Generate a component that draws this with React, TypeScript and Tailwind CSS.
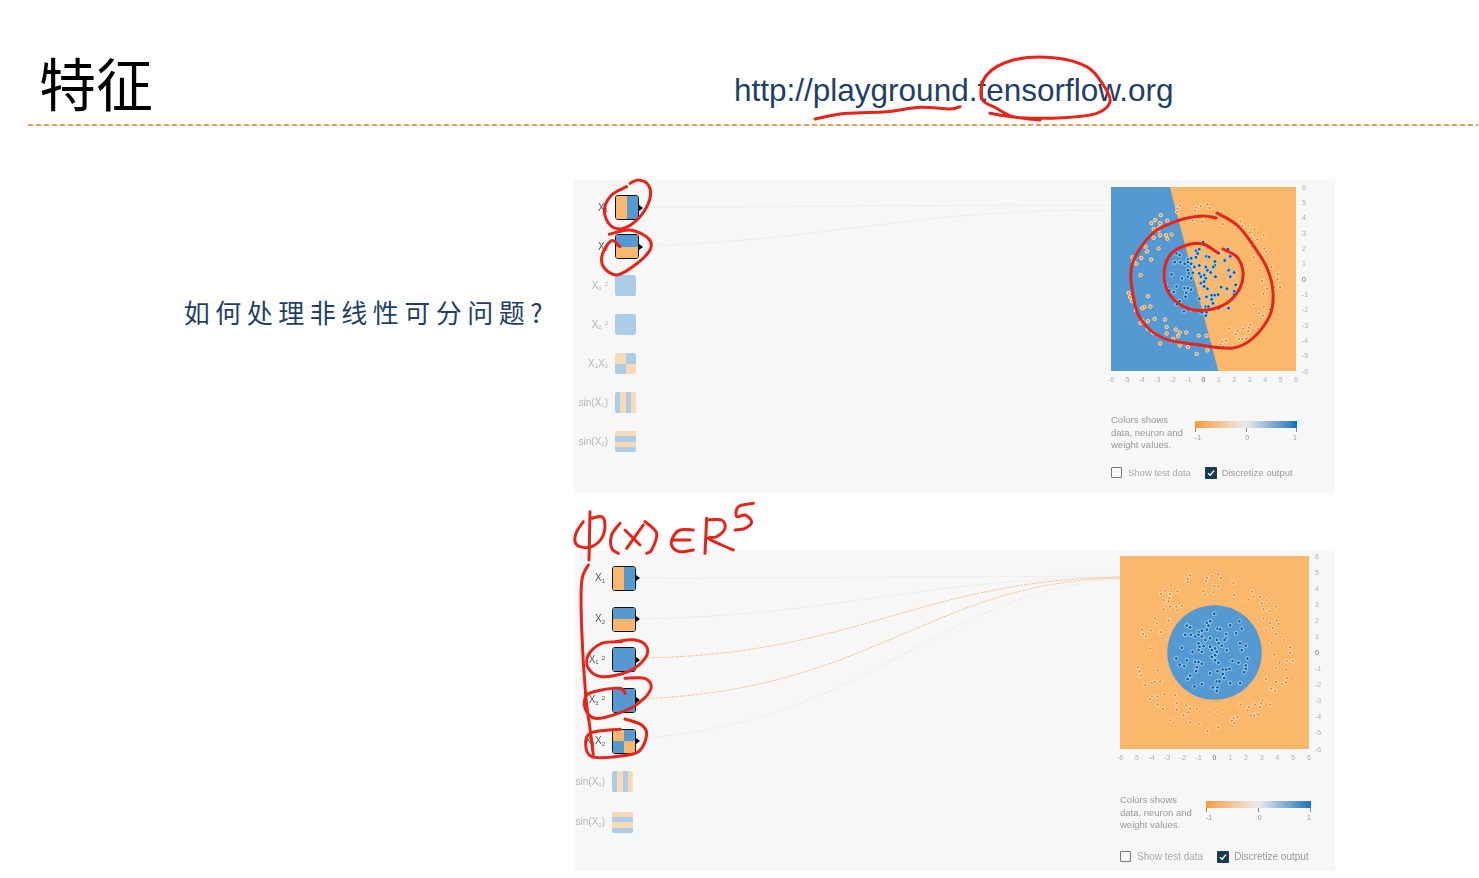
const BLUE = "#5599d3";
const ORANGE = "#fbb76c";
const CJK = "font-['Noto_Sans_CJK_SC','Noto_Sans',sans-serif]";

type Pt = [number, number];

// scatter positions, read off the second plot (px in a 3x crop)
const OUTER: Pt[] = [
  [270, 95], [263, 105], [262, 115], [320, 102], [318, 112], [335, 97], [355, 92], [362, 103], [400, 117], [343, 127], [355, 128],
  [340, 145], [402, 153], [212, 125], [195, 140], [183, 150], [210, 150], [207, 163], [232, 142], [190, 168], [205, 172], [310, 142],
  [315, 152], [456, 143], [462, 158], [445, 167], [480, 158], [485, 178], [500, 168], [528, 187], [190, 195], [210, 187], [228, 187],
  [245, 185], [232, 198], [490, 195], [508, 200], [490, 222], [165, 222], [170, 237], [205, 228], [530, 228], [535, 238], [510, 235],
  [125, 255], [128, 268], [137, 275], [152, 257], [182, 262], [497, 255], [518, 250], [528, 268], [551, 285], [515, 295], [150, 310],
  [570, 307], [570, 323], [523, 328], [578, 347], [560, 347], [538, 352], [527, 368], [113, 365], [118, 378], [123, 390], [173, 375],
  [558, 372], [135, 418], [155, 412], [162, 408], [180, 407], [497, 400], [560, 397], [558, 410], [545, 415], [528, 408], [513, 428],
  [525, 435], [155, 450], [150, 458], [172, 452], [193, 445], [225, 447], [172, 475], [188, 488], [230, 470], [230, 490], [258, 478],
  [270, 487], [265, 498], [290, 487], [250, 507], [422, 475], [487, 462], [483, 472], [465, 475], [447, 482], [480, 483], [510, 475],
  [442, 492], [470, 503], [452, 507], [462, 507], [475, 505], [328, 497], [352, 497], [412, 512], [400, 515], [395, 523], [403, 530],
  [210, 521], [270, 527], [295, 532], [355, 542], [322, 553],
];
const INNER: Pt[] = [
  [342, 208], [260, 243], [270, 248], [330, 230], [320, 235], [325, 243], [305, 258], [295, 262], [390, 242], [418, 230], [425, 252],
  [352, 252], [360, 254], [408, 265], [255, 270], [272, 270], [285, 275], [295, 270], [305, 275], [320, 255], [378, 268], [378, 280],
  [373, 285], [350, 285], [330, 280], [315, 285], [295, 295], [298, 305], [310, 303], [245, 308], [277, 320], [295, 315], [305, 320],
  [330, 305], [345, 310], [355, 295], [365, 302], [335, 315], [350, 320], [380, 315], [420, 295], [437, 302], [425, 315], [228, 340],
  [238, 358], [252, 362], [260, 345], [285, 350], [295, 350], [305, 355], [290, 365], [288, 377], [345, 330], [335, 335], [345, 345],
  [355, 352], [397, 347], [415, 352], [442, 340], [437, 360], [437, 370], [432, 380], [330, 383], [352, 377], [368, 372], [378, 372],
  [388, 370], [368, 385], [372, 397], [390, 412], [420, 412], [270, 390], [262, 400], [283, 422], [305, 415], [338, 425], [350, 407],
  [358, 407], [352, 425], [350, 435],
];

const X1 = <>X<sub className="text-[6px]">1</sub></>;
const X2 = <>X<sub className="text-[6px]">2</sub></>;

const features = [
  { label: X1, colors: [ORANGE, BLUE], dir: "row" },
  { label: X2, colors: [BLUE, ORANGE], dir: "col" },
  { label: <>X<sub className="text-[6px]">1</sub><sup className="ml-[3px] text-[6px]">2</sup></>, colors: [BLUE], dir: "row" },
  { label: <>X<sub className="text-[6px]">2</sub><sup className="ml-[3px] text-[6px]">2</sup></>, colors: [BLUE], dir: "row" },
  { label: <>{X1}{X2}</>, colors: [], dir: "cross" },
  { label: <>sin({X1})</>, colors: [BLUE, ORANGE, BLUE, ORANGE], dir: "row" },
  { label: <>sin({X2})</>, colors: [ORANGE, BLUE, ORANGE, BLUE], dir: "col" },
];

function FeatureBox({ colors, dir, active, size }: { colors: string[]; dir: string; active: boolean; size: string }) {
  const inner =
    dir === "cross" ? (
      <div className="grid h-full w-full grid-cols-2 grid-rows-2">
        <div style={{ background: ORANGE }} />
        <div style={{ background: BLUE }} />
        <div style={{ background: BLUE }} />
        <div style={{ background: ORANGE }} />
      </div>
    ) : (
      <div className={`flex h-full w-full ${dir === "col" ? "flex-col" : "flex-row"}`}>
        {colors.map((c, i) => (
          <div key={i} className="flex-1" style={{ background: c }} />
        ))}
      </div>
    );
  if (!active) return <div className="h-[21px] w-[21px] overflow-hidden rounded-[2px] opacity-45">{inner}</div>;
  return (
    <div className={`relative ${size}`}>
      <div className="h-full w-full overflow-hidden rounded-[3px] border-[1.5px] border-[#111]">{inner}</div>
      <div className="absolute right-[-4px] top-1/2 h-0 w-0 -translate-y-1/2 border-y-[3px] border-l-[4px] border-y-transparent border-l-black" />
    </div>
  );
}

function Features({ activeCount, rowClass, labelClass, size }: { activeCount: number; rowClass: string; labelClass: string; size: string }) {
  return (
    <div className="flex shrink-0 flex-col">
      {features.map((f, i) => (
        <div key={i} className={`flex items-center gap-[7px] ${rowClass}`}>
          <div className={`whitespace-nowrap text-right text-[10px] leading-none ${labelClass} ${i < activeCount ? "text-[#555]" : "text-[#b5b5b5]"}`}>
            {f.label}
          </div>
          <FeatureBox colors={f.colors} dir={f.dir} active={i < activeCount} size={size} />
        </div>
      ))}
    </div>
  );
}

function Chart({ w, h, kind }: { w: number; h: number; kind: "line" | "circle" }) {
  const ux = w / 12;
  const uy = h / 12;
  const px = (x: number) => ((x - 343) / 47.3) * ux + w / 2;
  const py = (y: number) => ((y - 322) / 47.3) * uy + h / 2;
  const ticks = [-6, -5, -4, -3, -2, -1, 0, 1, 2, 3, 4, 5, 6];
  return (
    <svg width={w + 24} height={h + 16} className="block overflow-visible font-['Liberation_Sans',sans-serif]">
      <rect width={w} height={h} fill={ORANGE} />
      {kind === "line" ? (
        <polygon points={`0,0 ${w * 0.318},0 ${w * 0.58},${h} 0,${h}`} fill={BLUE} />
      ) : (
        <circle cx={w / 2} cy={h / 2} r={w * 0.25} fill={BLUE} />
      )}
      {OUTER.map(([x, y], i) => (
        <circle key={i} cx={px(x)} cy={py(y)} r={1.7} fill="#e8892a" stroke="#fde3c0" strokeWidth={1} />
      ))}
      {INNER.map(([x, y], i) => (
        <circle key={i} cx={px(x)} cy={py(y)} r={1.9} fill="#0a5fa3" stroke="#b9daf3" strokeWidth={0.9} />
      ))}
      {ticks.map((t) => (
        <text key={`b${t}`} x={w / 2 + t * ux} y={h + 11} fontSize={7} textAnchor="middle" fill={t === 0 ? "#666" : "#b0b0b0"}>
          {t}
        </text>
      ))}
      {ticks.map((t) => (
        <text key={`r${t}`} x={w + 6} y={h / 2 - t * uy + 2.5} fontSize={7} fill={t === 0 ? "#666" : "#b0b0b0"}>
          {t}
        </text>
      ))}
    </svg>
  );
}

function Legend({ barClass }: { barClass: string }) {
  return (
    <div className="flex items-start">
      <div className="w-[84px] text-[9.5px] leading-[12.5px] text-[#999]">
        Colors shows
        <br />
        data, neuron and
        <br />
        weight values.
      </div>
      <div className={`mt-[7px] ${barClass}`}>
        <div className="h-[7px] bg-gradient-to-r from-[#f79a2e] via-[#e8eaeb] to-[#0872b8]" />
        <div className="flex h-[4px] justify-between">
          <span className="border-l border-[#888]" />
          <span className="border-l border-[#888]" />
          <span className="border-l border-[#888]" />
        </div>
        <div className="flex justify-between pt-[1px] text-[7px] leading-[9px] text-[#999]">
          <span>-1</span>
          <span>0</span>
          <span>1</span>
        </div>
      </div>
    </div>
  );
}

function Checks({ textClass }: { textClass: string }) {
  return (
    <div className={`flex items-center gap-[14px] leading-none text-[#aaa] ${textClass}`}>
      <div className="flex items-center gap-[6px]">
        <div className="h-[11px] w-[11px] rounded-[1px] border-[1.5px] border-[#777]" />
        Show test data
      </div>
      <div className="flex items-center gap-[5px]">
        <div className="flex h-[12px] w-[12px] items-center justify-center rounded-[1px] bg-[#183d4e]">
          <svg width="8" height="8" viewBox="0 0 8 8" fill="none" stroke="#fff" strokeWidth="1.4">
            <path d="M1 4.2 3.2 6.3 7 1.6" />
          </svg>
        </div>
        <span className="text-[#999]">Discretize output</span>
      </div>
    </div>
  );
}

// catmull-rom through the points, for the pen strokes
function ink(pts: Pt[]) {
  let d = `M${pts[0][0]} ${pts[0][1]}`;
  for (let i = 0; i < pts.length - 1; i++) {
    const p0 = pts[Math.max(i - 1, 0)];
    const p1 = pts[i];
    const p2 = pts[i + 1];
    const p3 = pts[Math.min(i + 2, pts.length - 1)];
    d += ` C${p1[0] + (p2[0] - p0[0]) / 6} ${p1[1] + (p2[1] - p0[1]) / 6} ${p2[0] - (p3[0] - p1[0]) / 6} ${p2[1] - (p3[1] - p1[1]) / 6} ${p2[0]} ${p2[1]}`;
  }
  return d;
}

// pts given in a 3x zoom crop with origin (ox, oy)
const z = (ox: number, oy: number, pts: Pt[]): Pt[] => pts.map(([x, y]) => [ox + x / 3, oy + y / 3]);

const strokes: Pt[][] = [
  // url underline and circle
  z(720, 45, [[285, 222], [380, 205], [500, 200], [600, 187], [690, 192], [720, 185]]),
  z(720, 45, [[960, 225], [880, 215], [830, 190], [785, 160], [800, 90], [880, 45], [1000, 38], [1100, 65], [1150, 120], [1170, 170], [1130, 205], [1030, 218], [900, 218], [810, 205]]),
  // first panel, input loops
  z(570, 175, [[170, 35], [125, 60], [103, 105], [120, 150], [160, 160], [210, 125], [240, 70], [235, 30], [205, 15], [180, 25]]),
  z(570, 175, [[118, 178], [180, 165], [235, 190], [240, 225], [195, 270], [140, 300], [100, 275], [98, 235], [125, 197], [150, 215]]),
  // first panel, rings on the plot
  [[1216, 218], [1203, 216], [1180, 220], [1153, 233], [1133, 262], [1132, 288], [1140, 318], [1163, 338], [1200, 345], [1233, 348], [1253, 338], [1270, 315], [1273, 292], [1267, 268], [1253, 245], [1237, 225], [1217, 213]],
  [[1218, 253], [1203, 244], [1187, 245], [1170, 255], [1164, 275], [1170, 295], [1187, 308], [1207, 310], [1227, 303], [1240, 288], [1243, 272], [1237, 257], [1223, 249]],
  // phi(x) in R^5
  z(565, 495, [[55, 80], [35, 110], [30, 140], [45, 155], [80, 155], [110, 130], [120, 90], [110, 65], [80, 70]]),
  z(565, 495, [[75, 50], [72, 195]]),
  z(565, 495, [[165, 85], [140, 120], [140, 160], [160, 175]]),
  z(565, 495, [[180, 105], [225, 150]]),
  z(565, 495, [[235, 90], [185, 160]]),
  z(565, 495, [[240, 80], [275, 115], [260, 165], [245, 175]]),
  z(565, 495, [[385, 105], [345, 105], [322, 130], [322, 155], [345, 170], [385, 165]]),
  z(565, 495, [[325, 135], [375, 135]]),
  z(565, 495, [[425, 70], [420, 175]]),
  z(565, 495, [[425, 75], [470, 75], [480, 100], [455, 125], [430, 130], [470, 150], [505, 165]]),
  z(565, 495, [[565, 25], [520, 35], [515, 65], [540, 60], [560, 80], [540, 100], [510, 105]]),
  // second panel, bracket and loops
  z(565, 495, [[70, 210], [50, 260], [50, 400], [62, 600], [75, 700], [85, 780]]),
  z(565, 495, [[150, 440], [210, 435], [245, 455], [240, 490], [190, 530], [110, 545], [70, 520], [70, 480], [110, 445], [170, 440]]),
  z(565, 495, [[180, 550], [240, 550], [258, 580], [220, 625], [160, 655], [90, 670], [60, 640], [65, 600], [110, 585], [165, 580], [180, 595]]),
  z(565, 495, [[180, 672], [230, 690], [245, 720], [220, 770], [150, 785], [80, 785], [62, 750], [75, 715], [130, 705], [165, 703]]),
];

export default function App() {
  return (
    <div className="relative h-[878px] w-[1479px] overflow-hidden bg-white font-['Liberation_Sans',sans-serif]">
      <header className="flex h-[124px] items-start pl-[39px]">
        <h1 className={`w-[695px] pt-[39px] text-[57px] leading-[84px] text-black ${CJK}`}>特征</h1>
        <a className="pt-[71px] text-[31.5px] leading-[38px] text-[#1f3f66]">http://playground.tensorflow.org</a>
      </header>
      <div className="ml-[28px] mr-[1px] h-[2px] bg-[repeating-linear-gradient(90deg,#d9a05b_0_5px,transparent_5px_8px)]" />

      <div className="flex">
        <div className="flex w-[574px] shrink-0 justify-end pr-[26px] pt-[168px]">
          <p className={`whitespace-nowrap text-[26px] leading-[36px] tracking-[5.5px] text-[#1f3f66] ${CJK}`}>如何处理非线性可分问题?</p>
        </div>

        <div className="flex flex-col gap-[58px] pt-[54px]">
          {/* first run: only x1, x2 on */}
          <section className="flex h-[313px] w-[761px] bg-[#f7f7f7] blur-[0.5px]">
            <div className="pt-[8px]">
              <Features activeCount={2} rowClass="h-[39px]" labelClass="w-[34px]" size="h-[25px] w-[24px]" />
            </div>
            <svg width="472" height="313" className="block shrink-0" fill="none" stroke="#eeeeee" strokeWidth="1">
              <path d="M0 27 C160 27 300 25 472 25" />
              <path d="M0 66 C200 60 260 30 472 30" />
            </svg>
            <div className="pt-[7px]">
              <Chart w={185} h={184} kind="line" />
              <div className="mt-[27px]">
                <Legend barClass="w-[102px]" />
              </div>
              <div className="mt-[15px]">
                <Checks textClass="text-[9.5px]" />
              </div>
            </div>
          </section>

          {/* second run: squares and product on */}
          <section className="ml-[1px] flex h-[320px] w-[760px] bg-[#f7f7f7] blur-[0.5px]">
            <div className="pt-[7px]">
              <Features activeCount={5} rowClass="h-[40.7px]" labelClass="w-[30px]" size="h-[25px] w-[24px]" />
            </div>
            <svg width="484" height="320" className="block shrink-0" fill="none" strokeWidth="1">
              <path d="M0 27 C160 27 300 26 484 25" stroke="#eeeeee" />
              <path d="M0 68 C200 65 280 28 484 26" stroke="#eeeeee" />
              <path d="M0 107 C220 105 280 30 484 26" stroke="#f3c99a" strokeDasharray="3 1" />
              <path d="M0 148 C240 140 290 32 484 27" stroke="#f3c99a" strokeDasharray="3 1" />
              <path d="M0 188 C240 170 300 40 484 28" stroke="#eeeeee" />
            </svg>
            <div className="pt-[5px]">
              <Chart w={189} h={193} kind="circle" />
              <div className="mt-[29px]">
                <Legend barClass="ml-[2px] w-[105px]" />
              </div>
              <div className="mt-[19px]">
                <Checks textClass="text-[10px]" />
              </div>
            </div>
          </section>
        </div>
      </div>

      {/* pen annotations on top of the slide */}
      <svg width="1479" height="878" className="pointer-events-none absolute left-0 top-0" fill="none" stroke="#e6241a" strokeWidth="3" strokeLinecap="round" strokeLinejoin="round">
        {strokes.map((s, i) => (
          <path key={i} d={ink(s)} />
        ))}
      </svg>
    </div>
  );
}
